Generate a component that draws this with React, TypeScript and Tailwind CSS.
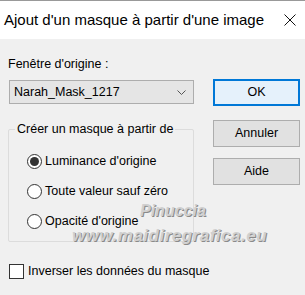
import React from 'react';

const font = { fontFamily: '"Liberation Sans", Arial, sans-serif' };

const Radio: React.FC<{ checked?: boolean; label: string }> = ({ checked, label }) => (
  <div className="flex items-center h-[15px]">
    <span className="shrink-0 w-[15px] h-[15px] rounded-full border border-[#333] bg-white flex items-center justify-center">
      {checked && <span className="w-[9px] h-[9px] rounded-full bg-[#333]" />}
    </span>
    <span className="ml-[3px] text-[12.5px] text-black leading-none whitespace-nowrap">{label}</span>
  </div>
);

const Button: React.FC<{ label: string; primary?: boolean }> = ({ label, primary }) => (
  <button
    className={`w-[87px] h-[27px] text-[12.5px] text-black ${
      primary ? 'border-2 border-[#0078d7] bg-[#e5f1fb]' : 'border border-[#adadad] bg-[#e1e1e1]'
    }`}
  >
    {label}
  </button>
);

export default function App() {
  return (
    <div className="w-[305px] h-[295px] bg-[#f0f0f0] relative overflow-hidden" style={font}>
      <div className="h-[39px] bg-white border-t border-[#999] flex items-center justify-between pl-[4px] pr-[9px]">
        <span className="text-[15px] text-black whitespace-nowrap">Ajout d'un masque à partir d'une image</span>
        <svg width="12" height="12" viewBox="0 0 12 12" stroke="#111" strokeWidth="1">
          <path d="M0.5 0.5 L11.5 11.5 M11.5 0.5 L0.5 11.5" />
        </svg>
      </div>

      <div className="flex pl-[8px] pt-[19px]">
        <div className="w-[186px]">
          <div className="text-[12.5px] text-black leading-none h-[12px] whitespace-nowrap">Fenêtre d'origine :</div>
          <div className="mt-[10px] ml-[1px] h-[24px] border border-[#adadad] bg-[#e5e5e5] flex items-center justify-between pl-[4px] pr-[7px]">
            <span className="text-[12.5px] text-black">Narah_Mask_1217</span>
            <svg width="9" height="5" viewBox="0 0 9 5" fill="none" stroke="#555" strokeWidth="1">
              <path d="M0.5 0.5 L4.5 4.5 L8.5 0.5" />
            </svg>
          </div>

          <div className="relative mt-[25px] h-[113px] border border-[#dcdcdc] rounded-[2px]">
            <span className="absolute -top-[7px] left-[6px] px-[2px] bg-[#f0f0f0] text-[12.5px] leading-none text-black whitespace-nowrap">
              Créer un masque à partir de
            </span>
            <div className="pl-[18px] pt-[24px] flex flex-col gap-[15px]">
              <Radio checked label="Luminance d'origine" />
              <Radio label="Toute valeur sauf zéro" />
              <Radio label="Opacité d'origine" />
            </div>
          </div>

          <div className="mt-[22px] ml-[1px] flex items-center">
            <span className="shrink-0 w-[15px] h-[15px] border border-[#333] bg-white" />
            <span className="ml-[4px] text-[12.5px] text-black leading-none whitespace-nowrap">Inverser les données du masque</span>
          </div>
        </div>

        <div className="ml-[19px] mt-[21px] flex flex-col gap-[14px]">
          <Button label="OK" primary />
          <div className="flex flex-col gap-[11px]">
            <Button label="Annuler" />
            <Button label="Aide" />
          </div>
        </div>
      </div>

      <div
        className="absolute left-[140px] top-[203px] text-[16px] font-bold italic text-[#d0d0d0] leading-none"
        style={{ fontFamily: '"Liberation Sans", sans-serif', textShadow: '1px 1px 0 #8a8a8a' }}
      >
        Pinuccia
      </div>
      <div
        className="absolute left-[72px] top-[227px] text-[17px] font-bold italic text-[#d0d0d0] leading-none tracking-[0.5px]"
        style={{ fontFamily: '"Liberation Sans", sans-serif', textShadow: '1px 1px 0 #8a8a8a' }}
      >
        www.maidiregrafica.eu
      </div>
    </div>
  );
}
